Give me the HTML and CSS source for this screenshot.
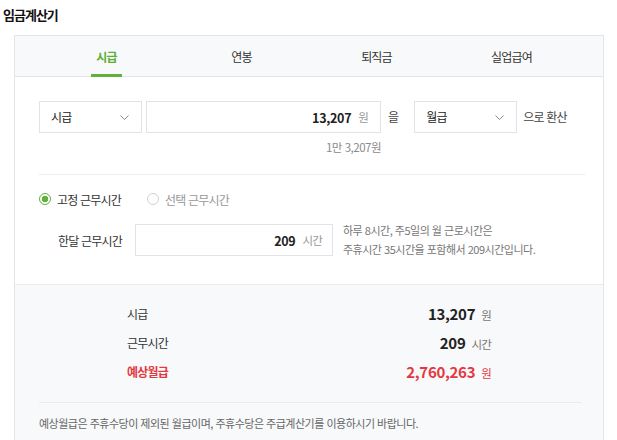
FILE: index.html
```html
<!DOCTYPE html>
<html lang="ko">
<head>
<meta charset="utf-8">
<title>임금계산기</title>
<link rel="stylesheet" href="styles.css">
</head>
<body>
<h1 class="title">임금계산기</h1>
<div class="card">
  <ul class="tabs">
    <li class="tab active">시급</li>
    <li class="tab">연봉</li>
    <li class="tab">퇴직금</li>
    <li class="tab">실업급여</li>
  </ul>

  <div class="convert">
    <div class="convert-row">
      <div class="select sel-from"><span>시급</span><svg class="chev" width="9" height="5" viewBox="0 0 9 5"><path d="M0.5 0.5 L4.5 4.5 L8.5 0.5" fill="none" stroke="#8a8a8a" stroke-width="1"/></svg></div>
      <div class="field amount"><span class="num">13,207</span><span class="unit">원</span></div>
      <span class="particle p1">을</span>
      <div class="select sel-to"><span>월급</span><svg class="chev" width="9" height="5" viewBox="0 0 9 5"><path d="M0.5 0.5 L4.5 4.5 L8.5 0.5" fill="none" stroke="#8a8a8a" stroke-width="1"/></svg></div>
      <span class="particle p2">으로 환산</span>
    </div>
    <div class="hint-row"><span class="hint">1만 3,207원</span></div>
  </div>

  <div class="hours">
    <div class="radios">
      <label class="radio checked"><span class="dot"></span>고정 근무시간</label>
      <label class="radio"><span class="dot"></span>선택 근무시간</label>
    </div>
    <div class="hour-row">
      <span class="hour-label">한달 근무시간</span>
      <div class="field hour-field"><span class="num">209</span><span class="unit">시간</span></div>
      <p class="help">하루 8시간, 주5일의 월 근로시간은<br>주휴시간 35시간을 포함해서 209시간입니다.</p>
    </div>
  </div>

  <div class="result">
    <dl class="rows">
      <div class="row"><dt>시급</dt><dd><span class="val">13,207</span><span class="u">원</span></dd></div>
      <div class="row"><dt>근무시간</dt><dd><span class="val">209</span><span class="u">시간</span></dd></div>
      <div class="row total"><dt>예상월급</dt><dd><span class="val">2,760,263</span><span class="u">원</span></dd></div>
    </dl>
    <p class="note">예상월급은 주휴수당이 제외된 월급이며, 주휴수당은 주급계산기를 이용하시기 바랍니다.</p>
  </div>
</div>
</body>
</html>
```

FILE: styles.css
```css
* { box-sizing: border-box; }
html, body { margin: 0; padding: 0; background: #fff; }
body {
  font-family: "Noto Sans CJK KR", "Noto Sans", sans-serif;
  color: #333;
  font-size: 12px;
  letter-spacing: -0.8px;
  padding: 0 0 0 3px;
  width: 617px;
  overflow: hidden;
}
.title {
  margin: 0;
  padding-top: 7px;
  font-size: 13px;
  line-height: 16px;
  font-weight: 700;
  color: #111;
  letter-spacing: -1px;
  margin-bottom: 12px;
}
.card {
  margin-left: 11px;
  width: 590px;
  border: 1px solid #e3e5e8;
  border-bottom: none;
  height: 420px;
}
.tabs {
  list-style: none;
  margin: 0;
  padding: 0 24px;
  height: 41px;
  background: #f8f9fa;
  border-bottom: 1px solid #e3e5e8;
  display: grid;
  grid-template-columns: repeat(4, 1fr);
}
.tab {
  position: relative;
  display: flex;
  align-items: center;
  justify-content: center;
  color: #333;
  font-size: 12px;
}
.tab.active { color: #5fae36; font-weight: 700; }
.tab.active::after {
  content: "";
  position: absolute;
  left: 50%;
  margin-left: -16px;
  width: 31px;
  height: 3px;
  bottom: -1px;
  background: #62b23a;
}
.convert { padding: 24px 0 0 24px; }
.convert-row { display: flex; align-items: center; height: 32px; }
.select, .field {
  height: 32px;
  border: 1px solid #e1e3e6;
  background: #fff;
  display: flex;
  align-items: center;
}
.select { justify-content: space-between; padding: 0 12px 1px 11px; color: #222; }
.sel-from { width: 103px; }
.sel-to { width: 103px; }
.chev { display: block; margin-top: 1px; }
.field { justify-content: flex-end; }
.amount { width: 235px; margin-left: 4px; padding-right: 12px; }
.num { font-weight: 700; color: #222; font-size: 12.5px; letter-spacing: -0.3px; }
.unit { color: #999; font-size: 11.5px; margin-left: 7px; }
.particle { color: #444; }
.p1 { margin: 0 16px 2px 7px; }
.p2 { margin: 0 0 2px 6px; }
.hint-row { width: 342px; display: flex; justify-content: flex-end; margin-top: 5px; line-height: 18px; }
.hint { color: #8a8a8a; font-size: 11.5px; letter-spacing: -0.5px; }
.hours {
  margin: 18px 18px 0 24px;
  border-top: 1px solid #eceef0;
  padding-top: 14px;
  height: 110px;
}
.radios { display: flex; height: 20px; align-items: center; }
.radio { display: flex; align-items: center; color: #333; margin-right: 26px; }
.radio .dot {
  width: 12px; height: 12px; border-radius: 50%;
  border: 1px solid #cfd2d5; background: #fff; margin-right: 6px;
}
.radio.checked .dot {
  border-color: #5fb33a;
  background: radial-gradient(circle, #5fb33a 0 3px, #fff 3.6px);
}
.radio:not(.checked) { color: #999; }
.hour-row { display: flex; align-items: center; margin-top: 12px; }
.hour-label { width: 96px; padding-left: 19px; color: #333; }
.hour-field { width: 198px; padding-right: 10px; }
.help { margin: 0 0 0 10px; font-size: 11px; line-height: 19px; color: #777; letter-spacing: -0.5px; }
.result {
  background: #f8f9fa;
  border-top: 1px solid #e9ebed;
  padding: 14px 24px 0;
  height: 160px;
}
.rows { margin: 0; padding: 0 88px; }
.row { display: flex; justify-content: space-between; align-items: center; height: 29px; }
.row dt { color: #333; }
.row dd { margin: 0; display: flex; align-items: baseline; }
.val { font-weight: 700; font-size: 15px; color: #222; letter-spacing: -0.3px; }
.u { font-size: 11.5px; color: #777; margin-left: 6px; }
.total dt { color: #e5373f; font-weight: 700; }
.total .val, .total .u { color: #e5373f; }
.note {
  margin: 16px 0 0;
  border-top: 1px solid #e9ebed;
  padding-top: 11px;
  line-height: 18px;
  color: #666;
  font-size: 11px;
  letter-spacing: -0.5px;
  width: 543px;
}
```
